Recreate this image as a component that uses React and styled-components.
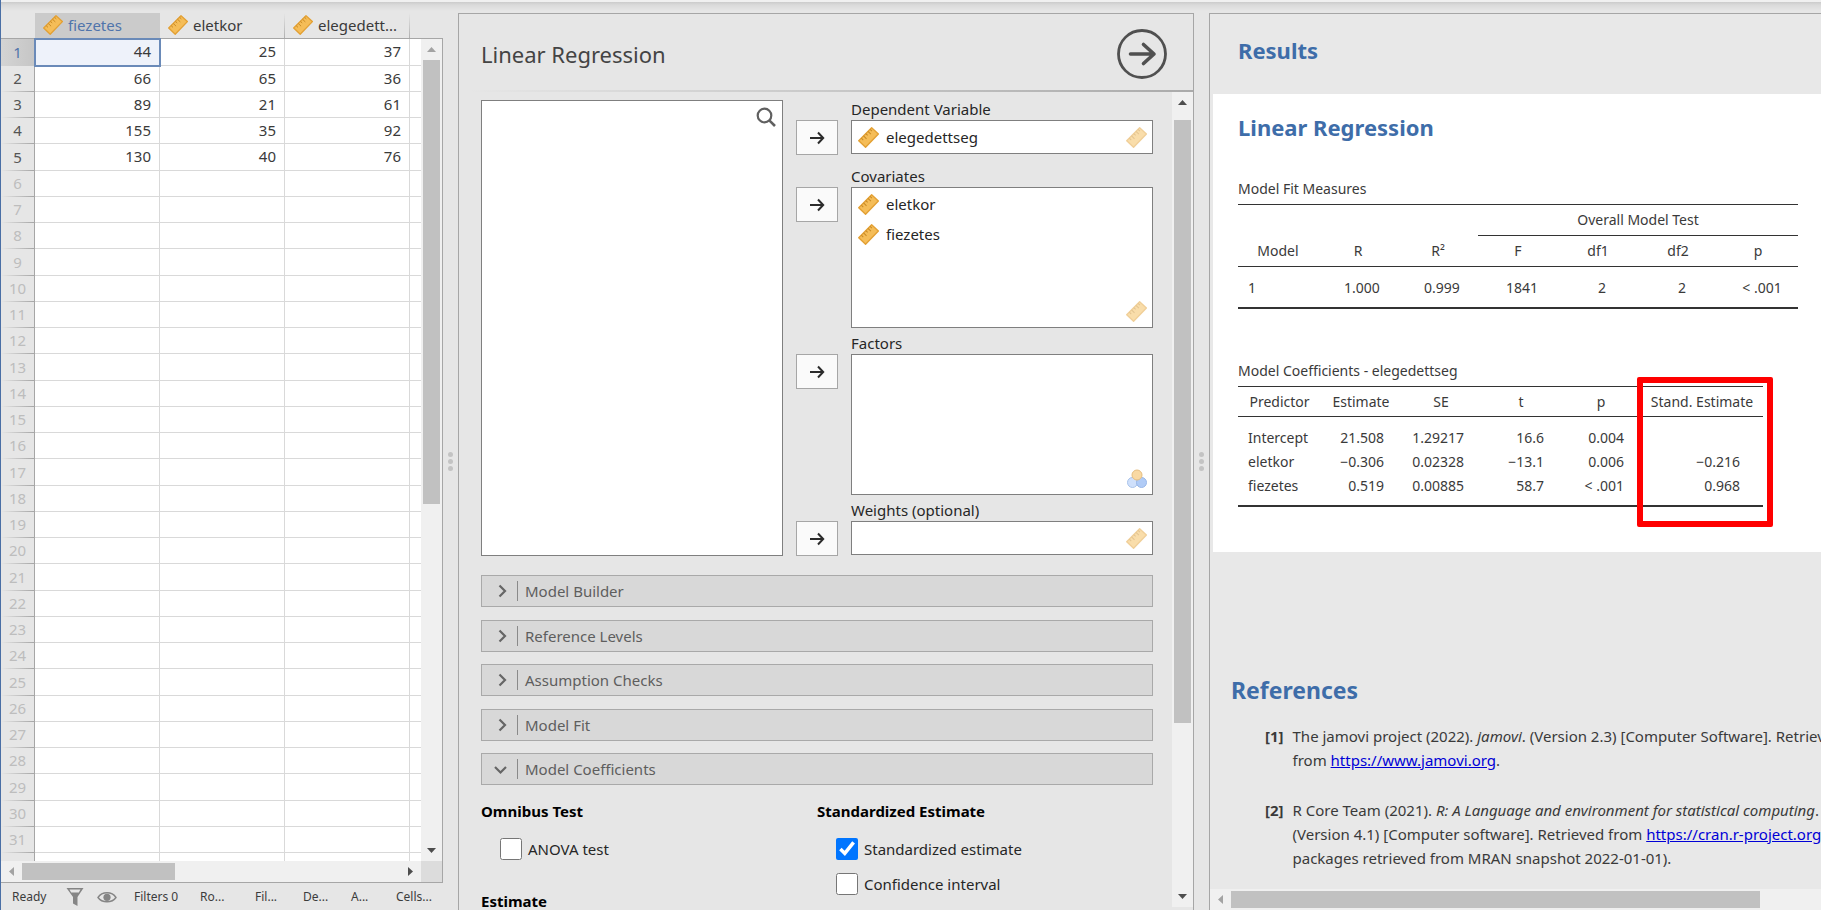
import React from "react";
import styled, { createGlobalStyle, css } from "styled-components";

const GlobalStyle = createGlobalStyle`
  *, *::before, *::after { box-sizing: border-box; }
  body {
    margin: 0;
    background: #e6e6e6;
    color: #3a3a3a;
    font-family: "Noto Sans", "Open Sans", sans-serif;
    font-size: 15px;
    line-height: 20px;
  }
  button { font: inherit; color: inherit; margin: 0; padding: 0; cursor: pointer; }
`;

const Shell = styled.div`
  display: flex;
  flex-direction: column;
  height: 100vh;
  overflow: hidden;
  border-left: 1px solid #4a6fa5;
`;

const TopEdge = styled.div`
  flex: none;
  height: 13px;
  background: linear-gradient(#f0f0f0 0 2px, #cbcbcb 2px, #dadada 5px, #e6e6e6 11px);
`;

const Workspace = styled.div`
  flex: 1;
  min-height: 0;
  display: grid;
  grid-template-columns: minmax(0, 442fr) 15px minmax(0, 736fr) 15px minmax(0, 612fr);
  grid-template-rows: minmax(0, 1fr);
`;

/* ---------- shared parts ---------- */

const Bar = styled.div`
  display: flex;
  align-items: center;
  background: #f0f0f0;
  flex: none;
  flex-direction: ${(p) => (p.$vertical ? "column" : "row")};
  ${(p) => (p.$vertical ? "width: 21px;" : "height: 21px;")}
`;

const BarArrow = styled.span`
  flex: none;
  display: flex;
  align-items: center;
  justify-content: center;
  width: 21px;
  height: 21px;
  color: ${(p) => (p.$muted ? "#a3a3a3" : "#4d4d4d")};
`;

const Thumb = styled.span`
  flex: ${(p) => p.$part} 0 0;
  background: #c1c1c1;
  ${(p) => (p.$vertical ? "width: 17px;" : "height: 17px;")}
`;

const Rest = styled.span`
  flex: ${(p) => p.$part} 0 0;
`;

const triangles = {
  up: "M0 7 4.500 2 9 7Z",
  down: "M0 2h9L4.500 7Z",
  left: "M7 0v9L2 4.500Z",
  right: "M2 0v9l5-4.500Z",
};

function Triangle({ dir }) {
  return (
    <svg width="9" height="9" viewBox="0 0 9 9" fill="currentColor" aria-hidden="true">
      <path d={triangles[dir]} />
    </svg>
  );
}

function ScrollBar({ vertical, atStart, openEnd, lead = 0, thumb, rest, className }) {
  return (
    <Bar $vertical={vertical} className={className} aria-hidden="true">
      <BarArrow $muted={atStart}>
        <Triangle dir={vertical ? "up" : "left"} />
      </BarArrow>
      <Rest $part={lead} />
      <Thumb $vertical={vertical} $part={thumb} />
      <Rest $part={rest} />
      {!openEnd && (
        <BarArrow>
          <Triangle dir={vertical ? "down" : "right"} />
        </BarArrow>
      )}
    </Bar>
  );
}

const Splitter = styled.div`
  display: flex;
  flex-direction: column;
  align-items: center;
  justify-content: center;
  gap: 2px;
`;

const Dot = styled.span`
  width: 5px;
  height: 5px;
  border-radius: 50%;
  background: #c3c3c3;
`;

function Handle() {
  return (
    <Splitter role="separator" aria-orientation="vertical">
      <Dot />
      <Dot />
      <Dot />
    </Splitter>
  );
}

const IconSvg = styled.svg`
  flex: none;
  display: block;
  opacity: ${(p) => (p.$faded ? 0.5 : 1)};
`;

function RulerIcon({ faded, size = 20 }) {
  return (
    <IconSvg $faded={faded} width={size} height={size} viewBox="0 0 20 20" aria-hidden="true">
      <path
        d="M13 .7 19.400 6.600 7.200 19.300.7 13Z"
        fill="#f5bd58"
        stroke="#e3a033"
        strokeWidth="1.300"
        strokeLinejoin="round"
      />
      <path
        d="M3.200 10.700l1.800 1.700M5.300 8.500l2.800 2.700M7.400 6.300l1.800 1.700M9.500 4.200l2.800 2.700M11.500 2.200l1.800 1.700"
        stroke="#c98b25"
        strokeWidth="1"
        fill="none"
      />
    </IconSvg>
  );
}

function NominalIcon() {
  return (
    <IconSvg width="20" height="20" viewBox="0 0 20 20" aria-hidden="true">
      <circle cx="5.500" cy="13.500" r="5" fill="#cfe0fb" stroke="#a9c3ea" />
      <circle cx="14.500" cy="13.500" r="5" fill="#b0cbf6" stroke="#98b7e8" />
      <circle cx="10" cy="6" r="5" fill="#f9d9a3" stroke="#e5be80" />
    </IconSvg>
  );
}

/* ---------- data sheet ---------- */

const SheetPane = styled.section`
  display: flex;
  flex-direction: column;
  min-width: 0;
  min-height: 0;
`;

const SheetBody = styled.div`
  flex: 1;
  min-height: 0;
  display: flex;
`;

const SheetView = styled.div`
  flex: 1;
  min-width: 0;
  overflow: hidden;
`;

const Sheet = styled.table`
  width: 100%;
  table-layout: fixed;
  border-collapse: separate;
  border-spacing: 0;
`;

const ColHead = styled.th`
  height: 26px;
  padding: 0 8px 2px;
  text-align: left;
  font-weight: 400;
  border-bottom: 1px solid #a6a6a6;
  ${(p) =>
    p.$ruled &&
    css`
      background: linear-gradient(transparent, #b0b0b0) right / 1px 100% no-repeat;
    `}
  ${(p) =>
    p.$active &&
    css`
      background: #cbcbcb;
      color: #4f74ab;
    `}
`;

const HeadLabel = styled.span`
  display: flex;
  align-items: center;
  gap: 5px;
  white-space: nowrap;
`;

const RowHead = styled.th`
  padding: 0 0 2px;
  font-weight: 400;
  text-align: center;
  border-right: 1px solid #a6a6a6;
  color: ${(p) => (p.$used ? "#555" : "#bdbdbd")};
  background: linear-gradient(90deg, transparent, #a6a6a6) bottom / 100% 1px no-repeat;
  ${(p) =>
    p.$active &&
    css`
      color: #4f74ab;
      background: linear-gradient(90deg, #d4d4d4, #c6c6c6);
    `}
`;

const Row = styled.tr`
  height: 26px;
  &:nth-child(4n + 1) { height: 27px; }
`;

const Cell = styled.td`
  padding: 0 8px 2px 0;
  text-align: right;
  background: #fff;
  border-right: 1px solid #d9d9d9;
  border-bottom: 1px solid #d9d9d9;
  &:last-child { border-right: 0; }
  ${(p) =>
    p.$active &&
    css`
      background: #eef2fa;
      outline: 2px solid #6a8ab8;
      outline-offset: -1px;
    `}
`;

const SheetScrollV = styled.div`
  display: flex;
  margin-top: 25px;
  border-top: 1px solid #a6a6a6;
  border-right: 1px solid #a6a6a6;
`;

const SheetFoot = styled.div`
  flex: none;
  display: flex;
  border-right: 1px solid #a6a6a6;
  border-bottom: 1px solid #a6a6a6;
  & > .wide { flex: 1; }
`;

const Corner = styled.span`
  width: 21px;
  background: #dcdcdc;
`;

const StatusBar = styled.footer`
  height: 27px;
  flex: none;
  display: flex;
  align-items: center;
  padding: 1px 8px 0 11px;
  font-size: 12px;
  color: #3c3c3c;
  white-space: nowrap;
`;

const StatusItem = styled.span`
  width: ${(p) => p.$w}px;
`;

const StatusIcon = styled.button`
  display: flex;
  border: 0;
  background: none;
  width: ${(p) => p.$w}px;
`;

const values = [
  [44, 25, 37],
  [66, 65, 36],
  [89, 21, 61],
  [155, 35, 92],
  [130, 40, 76],
];
const columns = ["fiezetes", "eletkor", "elegedett..."];

function DataSheet() {
  return (
    <SheetPane aria-label="Data">
      <SheetBody>
        <SheetView>
          <Sheet>
            <colgroup>
              <col width="34" />
              <col width="125" />
              <col width="125" />
              <col width="125" />
              <col />
            </colgroup>
            <thead>
              <tr>
                <ColHead />
                {columns.map((name, i) => (
                  <ColHead key={name} scope="col" $ruled $active={i === 0}>
                    <HeadLabel>
                      <RulerIcon />
                      {name}
                    </HeadLabel>
                  </ColHead>
                ))}
                <ColHead />
              </tr>
            </thead>
            <tbody>
              {Array.from({ length: 31 }, (_, r) => (
                <Row key={r}>
                  <RowHead scope="row" $used={r < values.length} $active={r === 0}>
                    {r + 1}
                  </RowHead>
                  {columns.map((name, c) => (
                    <Cell key={name} $active={r === 0 && c === 0}>
                      {values[r]?.[c]}
                    </Cell>
                  ))}
                  <Cell />
                </Row>
              ))}
              <Row>
                <RowHead />
                <Cell />
                <Cell />
                <Cell />
                <Cell />
              </Row>
            </tbody>
          </Sheet>
        </SheetView>
        <SheetScrollV>
          <ScrollBar vertical atStart thumb={444} rest={336} />
        </SheetScrollV>
      </SheetBody>
      <SheetFoot>
        <ScrollBar className="wide" atStart thumb={153} rest={224} />
        <Corner />
      </SheetFoot>
      <StatusBar>
        <StatusItem $w={54}>Ready</StatusItem>
        <StatusIcon $w={31} aria-label="Filters">
          <svg width="18" height="18" viewBox="0 0 18 18" fill="#858585" aria-hidden="true">
            <path d="M.5 0h17L11.500 9v9L7 15.500V9Z" />
            <path d="M3.500 1.500h11L12.800 4.500H5.200Z" fill="#e6e6e6" />
          </svg>
        </StatusIcon>
        <StatusIcon $w={37} aria-label="Show filtered rows">
          <svg width="20" height="18" viewBox="0 0 20 18" fill="none" aria-hidden="true">
            <path d="M1 9.500C5 3.200 15 3.200 19 9.500 15 15.200 5 15.200 1 9.500Z" stroke="#858585" strokeWidth="1.400" />
            <circle cx="10" cy="9.300" r="3.600" fill="#858585" />
          </svg>
        </StatusIcon>
        <StatusItem $w={66}>Filters 0</StatusItem>
        <StatusItem $w={55}>Ro...</StatusItem>
        <StatusItem $w={48}>Fil...</StatusItem>
        <StatusItem $w={48}>De...</StatusItem>
        <StatusItem $w={45}>A...</StatusItem>
        <StatusItem>Cells...</StatusItem>
      </StatusBar>
    </SheetPane>
  );
}

/* ---------- analysis options ---------- */

const OptionsPane = styled.section`
  display: flex;
  flex-direction: column;
  min-width: 0;
  min-height: 0;
  border: 1px solid #a6a6a6;
  border-bottom: 0;
`;

const OptionsHeader = styled.header`
  flex: none;
  height: 78px;
  display: flex;
  align-items: center;
  justify-content: space-between;
  padding: 1px 26px 0 22px;
  background: linear-gradient(90deg, transparent 10px, #aaa 100%) bottom / 100% 2px no-repeat;
`;

const OptionsTitle = styled.h1`
  margin: 0;
  font-size: 22px;
  line-height: 30px;
  font-weight: 400;
  color: #444;
`;

const RunButton = styled.button`
  display: flex;
  border: 0;
  background: none;
`;

const OptionsScroll = styled.div`
  flex: 1;
  min-height: 0;
  display: flex;
  padding-bottom: 3px;
`;

const OptionsContent = styled.div`
  flex: 1;
  min-width: 0;
  overflow: hidden;
  margin-bottom: -3px;
  padding: 8px 19px 0 22px;
`;

const Assign = styled.div`
  display: grid;
  grid-template-columns: minmax(0, 302fr) minmax(0, 357fr);
  gap: 13px;
`;

const Supplier = styled.div`
  display: flex;
  justify-content: flex-end;
  align-items: flex-start;
  padding: 6px;
  background: #fff;
  border: 1px solid #7f7f7f;
`;

const SearchButton = styled.button`
  display: flex;
  border: 0;
  background: none;
`;

const Targets = styled.div`
  display: flex;
  flex-direction: column;
  gap: 6px;
`;

const Target = styled.div`
  display: grid;
  grid-template-columns: 42px minmax(0, 1fr);
  grid-template-rows: 20px auto;
  column-gap: 13px;
  margin-bottom: ${(p) => (p.$spaced ? 6 : 0)}px;
  color: #262626;
`;

const TargetLabel = styled.span`
  grid-column: 2;
  line-height: 18px;
`;

const AssignButton = styled.button`
  display: flex;
  align-items: center;
  justify-content: center;
  height: 35px;
  background: #fafafa;
  border: 1px solid #a6a6a6;
`;

const TargetBox = styled.ul`
  position: relative;
  margin: 0;
  padding: 1px 6px;
  list-style: none;
  height: ${(p) => (p.$tall ? 141 : 34)}px;
  background: #fff;
  border: 1px solid #7f7f7f;
`;

const Variable = styled.li`
  display: flex;
  align-items: center;
  gap: 7px;
  height: 30px;
`;

const Permitted = styled.span`
  position: absolute;
  right: 5px;
  bottom: 5px;
`;

const Sections = styled.div`
  display: flex;
  flex-direction: column;
  margin-top: 19px;
`;

const SectionButton = styled.button`
  display: flex;
  align-items: center;
  height: 32px;
  margin-bottom: 13px;
  padding: 0 0 1px 12px;
  text-align: left;
  color: #5e5e5e;
  background: #d8d8d8;
  border: 1px solid #a9a9a9;
  &:nth-child(even) { margin-bottom: 12px; }
`;

const SectionName = styled.span`
  margin-left: 10px;
  padding-left: 7px;
  border-left: 1px solid #8a8a8a;
`;

const CheckArea = styled.div`
  display: grid;
  grid-template-columns: 1fr 1fr;
  align-items: start;
  padding-top: 1px;
  color: #262626;
`;

const Group = styled.fieldset`
  display: flex;
  flex-direction: column;
  gap: 13px;
  margin: 0 0 29px;
  padding: 0;
  border: 0;
`;

const GroupTitle = styled.legend`
  padding: 0;
  margin-bottom: 15px;
  line-height: 24px;
  font-weight: 700;
  color: #000;
`;

const CheckLabel = styled.label`
  display: flex;
  align-items: center;
  gap: 6px;
  height: 22px;
  padding-left: 19px;
`;

const CheckInput = styled.input`
  width: 22px;
  height: 22px;
  margin: 0;
  accent-color: #0075ff;
`;

function Check({ children, checked }) {
  return (
    <CheckLabel>
      <CheckInput type="checkbox" defaultChecked={checked} />
      {children}
    </CheckLabel>
  );
}

function TargetField({ label, items = [], tall, spaced, icon = <RulerIcon faded size={21} /> }) {
  return (
    <Target $spaced={spaced}>
      <TargetLabel>{label}</TargetLabel>
      <AssignButton aria-label={`Move to ${label}`}>
        <svg width="16" height="14" viewBox="0 0 16 14" fill="none" stroke="#2b2b2b" strokeWidth="2" aria-hidden="true">
          <path d="M1 7h13M9 1.500 14.200 7 9 12.500" />
        </svg>
      </AssignButton>
      <TargetBox $tall={tall} aria-label={label}>
        {items.map((name) => (
          <Variable key={name}>
            <RulerIcon size={21} />
            {name}
          </Variable>
        ))}
        <Permitted as="li">{icon}</Permitted>
      </TargetBox>
    </Target>
  );
}

function Section({ name, open }) {
  return (
    <SectionButton aria-expanded={!!open}>
      <svg width="13" height="14" viewBox="0 0 13 14" fill="none" stroke="#666" strokeWidth="2.200" aria-hidden="true">
        <path d={open ? "M1 5l5.500 5.500L12 5" : "M5.500 1.500 11 7l-5.500 5.500"} />
      </svg>
      <SectionName>{name}</SectionName>
    </SectionButton>
  );
}

function Options() {
  return (
    <OptionsPane aria-label="Analysis options">
      <OptionsHeader>
        <OptionsTitle>Linear Regression</OptionsTitle>
        <RunButton aria-label="Hide options">
          <svg width="50" height="50" viewBox="0 0 50 50" fill="none" stroke="#505050" aria-hidden="true">
            <circle cx="25" cy="25" r="23.500" strokeWidth="2.800" />
            <path d="M13.500 25h23M26.500 15.500 37 25 26.500 34.500" strokeWidth="3.600" strokeLinecap="round" strokeLinejoin="round" />
          </svg>
        </RunButton>
      </OptionsHeader>
      <OptionsScroll>
        <OptionsContent>
          <Assign>
            <Supplier>
              <SearchButton aria-label="Search variables">
                <svg width="20" height="20" viewBox="0 0 20 20" fill="none" stroke="#606060" aria-hidden="true">
                  <circle cx="8.500" cy="8.500" r="6.800" strokeWidth="2.200" />
                  <path d="M13.300 13.300 19 19" strokeWidth="2.600" />
                </svg>
              </SearchButton>
            </Supplier>
            <Targets>
              <TargetField label="Dependent Variable" items={["elegedettseg"]} spaced />
              <TargetField label="Covariates" items={["eletkor", "fiezetes"]} tall />
              <TargetField label="Factors" tall icon={<NominalIcon />} />
              <TargetField label="Weights (optional)" />
            </Targets>
          </Assign>
          <Sections>
            <Section name="Model Builder" />
            <Section name="Reference Levels" />
            <Section name="Assumption Checks" />
            <Section name="Model Fit" />
            <Section name="Model Coefficients" open />
          </Sections>
          <CheckArea>
            <div>
              <Group>
                <GroupTitle>Omnibus Test</GroupTitle>
                <Check>ANOVA test</Check>
              </Group>
              <Group>
                <GroupTitle>Estimate</GroupTitle>
              </Group>
            </div>
            <Group>
              <GroupTitle>Standardized Estimate</GroupTitle>
              <Check checked>Standardized estimate</Check>
              <Check>Confidence interval</Check>
            </Group>
          </CheckArea>
        </OptionsContent>
        <ScrollBar vertical lead={7} thumb={601} rest={163} />
      </OptionsScroll>
    </OptionsPane>
  );
}

/* ---------- results ---------- */

const ResultsPane = styled.section`
  display: flex;
  flex-direction: column;
  min-width: 0;
  min-height: 0;
  background: #e8e8e8;
  border-left: 1px solid #a6a6a6;
  border-top: 1px solid #a6a6a6;
`;

const ResultsView = styled.div`
  flex: 1;
  min-height: 0;
  overflow: hidden;
  padding-left: 3px;
`;

const Heading = styled.h2`
  margin: 0;
  font-size: ${(p) => (p.$large ? 23 : 22)}px;
  line-height: 30px;
  font-weight: 700;
  color: #3e6da9;
`;

const ResultsTop = styled.div`
  height: 80px;
  padding: 21px 25px;
`;

const Analysis = styled.article`
  height: 458px;
  padding: 18px 25px 0;
  background: #fff;
`;

const ResultTable = styled.table`
  table-layout: fixed;
  width: ${(p) => p.$w}px;
  border-collapse: separate;
  border-spacing: 0;
  border-bottom: 2px solid #333;
  font-size: 14px;
  line-height: 24px;
  margin-top: ${(p) => p.$top}px;
  th, td { padding: 0; font-weight: 400; white-space: nowrap; }
  caption { text-align: left; height: 27px; }
  thead th { height: 31px; text-align: center; vertical-align: middle; }
  thead tr:first-child th { border-top: 1px solid #333; }
  thead tr:last-child th, thead th[rowspan] { border-bottom: 1px solid #333; }
  thead th[rowspan] { vertical-align: bottom; padding-bottom: 3px; }
  thead th[colspan] { height: 32px; border-bottom: 1px solid #333; }
  tbody th { text-align: left; padding-left: 10px; }
  tbody tr:first-child > * { padding-top: 9px; }
  tbody tr:last-child > * { padding-bottom: 7px; }
`;

const CenterCell = styled.td`
  text-align: center;
  && { padding-left: 8px; }
`;

const NumCell = styled.td`
  text-align: right;
  && { padding-right: ${(p) => (p.$last ? 23 : 17)}px; }
`;

const TableWrap = styled.div`
  position: relative;
  width: fit-content;
`;

const Highlight = styled.div`
  position: absolute;
  top: 18px;
  right: -10px;
  bottom: -20px;
  width: 136px;
  border: 6px solid #f00;
  border-radius: 2px;
`;

const References = styled.section`
  padding: 123px 0 0 18px;
`;

const RefList = styled.ol`
  list-style: none;
  margin: 19px 0 0;
  padding: 0 0 0 34px;
  line-height: 24px;
`;

const RefItem = styled.li`
  display: flex;
  gap: 9px;
  margin-bottom: 26px;
  white-space: nowrap;
  b { width: 19px; }
  a { color: #0000d6; }
`;

function Results() {
  return (
    <ResultsPane aria-label="Results">
      <ResultsView>
        <ResultsTop>
          <Heading>Results</Heading>
        </ResultsTop>
        <Analysis>
          <Heading>Linear Regression</Heading>
          <ResultTable $w={560} $top={35}>
            <caption>Model Fit Measures</caption>
            <thead>
              <tr>
                <th rowSpan={2} scope="col">Model</th>
                <th rowSpan={2} scope="col">R</th>
                <th rowSpan={2} scope="col">R²</th>
                <th colSpan={4} scope="colgroup">Overall Model Test</th>
              </tr>
              <tr>
                <th scope="col">F</th>
                <th scope="col">df1</th>
                <th scope="col">df2</th>
                <th scope="col">p</th>
              </tr>
            </thead>
            <tbody>
              <tr>
                <th scope="row">1</th>
                {["1.000", "0.999", "1841", "2", "2", "< .001"].map((v, i) => (
                  <CenterCell key={i}>{v}</CenterCell>
                ))}
              </tr>
            </tbody>
          </ResultTable>
          <TableWrap>
            <ResultTable $w={525} $top={50}>
              <caption>Model Coefficients - elegedettseg</caption>
              <colgroup>
                <col width="83" />
                <col width="80" />
                <col width="80" />
                <col width="80" />
                <col width="80" />
                <col width="122" />
              </colgroup>
              <thead>
                <tr>
                  {["Predictor", "Estimate", "SE", "t", "p", "Stand. Estimate"].map((h) => (
                    <th key={h} scope="col">{h}</th>
                  ))}
                </tr>
              </thead>
              <tbody>
                {[
                  ["Intercept", "21.508", "1.29217", "16.6", "0.004", ""],
                  ["eletkor", "−0.306", "0.02328", "−13.1", "0.006", "−0.216"],
                  ["fiezetes", "0.519", "0.00885", "58.7", "< .001", "0.968"],
                ].map(([name, ...cells]) => (
                  <tr key={name}>
                    <th scope="row">{name}</th>
                    {cells.map((v, i) => (
                      <NumCell key={i} $last={i === 4}>{v}</NumCell>
                    ))}
                  </tr>
                ))}
              </tbody>
            </ResultTable>
            <Highlight />
          </TableWrap>
        </Analysis>
        <References>
          <Heading $large>References</Heading>
          <RefList>
            <RefItem>
              <b>[1]</b>
              <span>
                The jamovi project (2022). <i>jamovi</i>. (Version 2.3) [Computer Software]. Retrieved
                <br />
                from <a href="https://www.jamovi.org">https://www.jamovi.org</a>.
              </span>
            </RefItem>
            <RefItem>
              <b>[2]</b>
              <span>
                R Core Team (2021). <i>R: A Language and environment for statistical computing</i>.
                <br />
                (Version 4.1) [Computer software]. Retrieved from{" "}
                <a href="https://cran.r-project.org">https://cran.r-project.org</a>. (R
                <br />
                packages retrieved from MRAN snapshot 2022-01-01).
              </span>
            </RefItem>
          </RefList>
        </References>
      </ResultsView>
      <ScrollBar atStart openEnd thumb={529} rest={61} />
    </ResultsPane>
  );
}

export default function App() {
  return (
    <>
      <GlobalStyle />
      <Shell>
        <TopEdge />
        <Workspace>
          <DataSheet />
          <Handle />
          <Options />
          <Handle />
          <Results />
        </Workspace>
      </Shell>
    </>
  );
}
